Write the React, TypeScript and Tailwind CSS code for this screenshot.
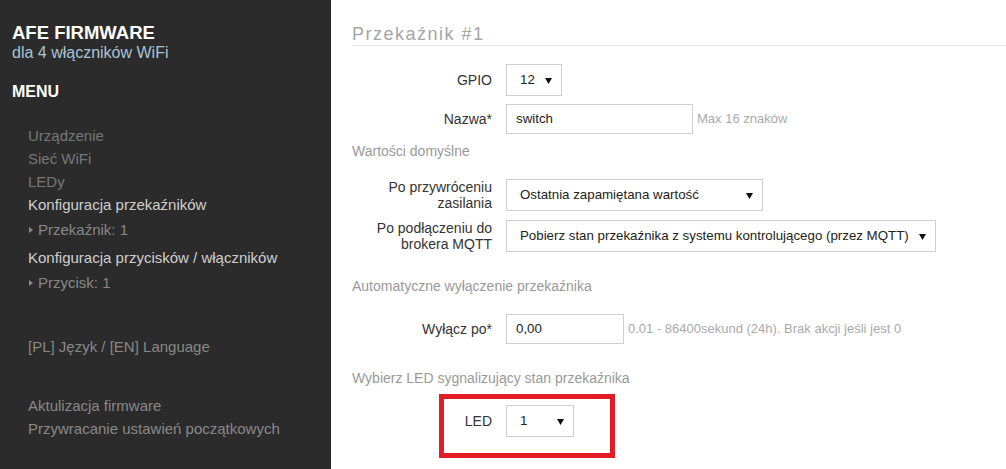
import React from "react";

const Arrow = () => (
  <svg width="7" height="7" viewBox="0 0 7 7" className="shrink-0">
    <polygon points="0,1 7,1 3.5,7" fill="#111" />
  </svg>
);

const Tri = () => (
  <svg width="4" height="6" viewBox="0 0 4 6" className="mr-[5px] shrink-0">
    <polygon points="0,0 4,3 0,6" fill="#8a8a8a" />
  </svg>
);

function Select({ value, w }: { value: string; w: string }) {
  return (
    <div
      className={`${w} h-[32px] border border-[#cfcfcf] bg-white flex items-center justify-between pl-[13px] pr-[9px] text-[13.3px] text-[#222]`}
    >
      <span className="whitespace-nowrap">{value}</span>
      <Arrow />
    </div>
  );
}

function Input({ value, w }: { value: string; w: string }) {
  return (
    <div
      className={`${w} h-[30px] border border-[#cfcfcf] bg-white flex items-center pl-[9px] text-[13.3px] text-[#222]`}
    >
      {value}
    </div>
  );
}

function Label({ children }: { children: React.ReactNode }) {
  return (
    <div className="w-[140px] text-right text-[14px] leading-[16px] text-[#333] shrink-0">
      {children}
    </div>
  );
}

export default function App() {
  return (
    <div
      className="flex w-[1006px] h-[469px] overflow-hidden bg-white"
      style={{ fontFamily: '"Liberation Sans", Arial, sans-serif' }}
    >
      <aside className="w-[331px] shrink-0 bg-[#2b2b2b] pl-[12px] pt-[23px] flex flex-col">
        <div className="text-[18.5px] leading-[20px] font-bold text-white">AFE FIRMWARE</div>
        <div className="text-[16px] leading-[18px] text-[#a8c4d6] mt-[1px]">dla 4 włączników WiFi</div>
        <div className="mt-[20px] text-[16px] leading-[20px] font-bold text-white">MENU</div>
        <div className="mt-[22px] pl-[16px] flex flex-col text-[15px] leading-[23px]">
          <div className="text-[#777]">Urządzenie</div>
          <div className="text-[#777]">Sieć WiFi</div>
          <div className="text-[#777]">LEDy</div>
          <div className="text-[#cfcfcf]">Konfiguracja przekaźników</div>
          <div className="mt-[1px] flex items-center text-[#888] pl-[1px] leading-[25px]">
            <Tri />
            Przekaźnik: 1
          </div>
          <div className="mt-[4px] text-[#cfcfcf]">Konfiguracja przycisków / włączników</div>
          <div className="mt-[2px] flex items-center text-[#888] pl-[1px]">
            <Tri />
            Przycisk: 1
          </div>
          <div className="mt-[41px] text-[#888]">[PL] Język / [EN] Language</div>
          <div className="mt-[36px] text-[#888]">Aktulizacja firmware</div>
          <div className="text-[#888]">Przywracanie ustawień początkowych</div>
        </div>
      </aside>

      <main className="flex-1 pl-[21px] flex flex-col text-[#333]">
        <div className="pt-[23px] border-b border-[#e6e6e6] text-[18px] leading-[22px] tracking-[1.5px] text-[#a5a5a5]">
          Przekaźnik #1
        </div>

        <div className="mt-[18px] flex items-center gap-[14px]">
          <Label>GPIO</Label>
          <Select value="12" w="w-[56px]" />
        </div>
        <div className="mt-[8px] flex items-center gap-[14px]">
          <Label>Nazwa*</Label>
          <Input value="switch" w="w-[187px]" />
          <span className="-ml-[10px] text-[13px] text-[#aaa]">Max 16 znaków</span>
        </div>

        <div className="mt-[8px] text-[14px] leading-[18px] text-[#999]">Wartości domyślne</div>

        <div className="mt-[19px] flex items-center gap-[14px]">
          <Label>
            Po przywróceniu
            <br />
            zasilania
          </Label>
          <Select value="Ostatnia zapamiętana wartość" w="w-[257px]" />
        </div>
        <div className="mt-[9px] flex items-center gap-[14px]">
          <Label>
            Po podłączeniu do
            <br />
            brokera MQTT
          </Label>
          <Select value="Pobierz stan przekaźnika z systemu kontrolującego (przez MQTT)" w="w-[430px]" />
        </div>

        <div className="mt-[25px] text-[14px] leading-[18px] text-[#999]">
          Automatyczne wyłączenie przekaźnika
        </div>

        <div className="mt-[19px] flex items-center gap-[14px]">
          <Label>Wyłącz po*</Label>
          <Input value="0,00" w="w-[118px]" />
          <span className="-ml-[10px] text-[13px] text-[#aaa]">
            0.01 - 86400sekund (24h). Brak akcji jeśli jest 0
          </span>
        </div>

        <div className="mt-[25px] text-[14px] leading-[18px] text-[#999]">
          Wybierz LED sygnalizujący stan przekaźnika
        </div>

        <div className="mt-[7px] ml-[87px] w-[176px] h-[64px] border-[5px] border-[#e31c25] flex items-start pt-[6px]">
          <div className="w-[48px] text-right text-[14px] leading-[32px] text-[#333]">LED</div>
          <div className="ml-[14px]">
            <Select value="1" w="w-[68px]" />
          </div>
        </div>
      </main>
    </div>
  );
}
